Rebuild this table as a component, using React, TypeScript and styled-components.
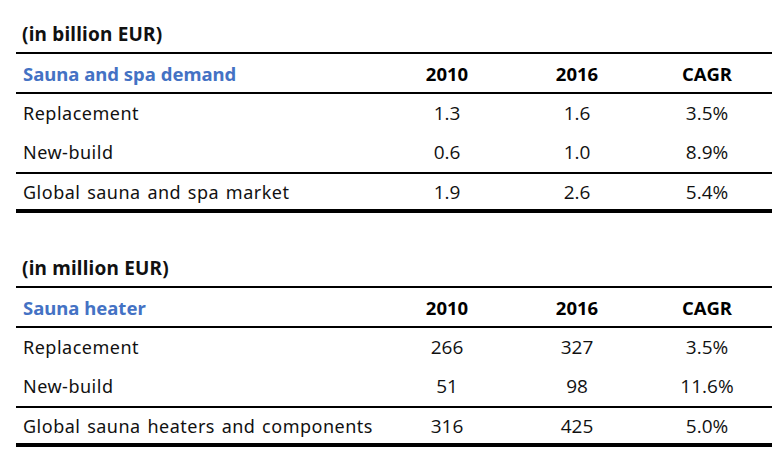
import React from "react"
import styled, { createGlobalStyle } from "styled-components"

const GlobalStyle = createGlobalStyle`
  html, body {
    margin: 0;
    padding: 0;
    background: #ffffff;
  }
  body {
    font-family: "Open Sans", "Noto Sans", sans-serif;
    color: #111111;
  }
`

interface Row {
  label: string
  y2010: string
  y2016: string
  cagr: string
}

interface TableData {
  unit: string
  title: string
  rows: Row[]
  total: Row
}

const tables: TableData[] = [
  {
    unit: "(in billion EUR)",
    title: "Sauna and spa demand",
    rows: [
      { label: "Replacement", y2010: "1.3", y2016: "1.6", cagr: "3.5%" },
      { label: "New-build", y2010: "0.6", y2016: "1.0", cagr: "8.9%" },
    ],
    total: { label: "Global sauna and spa market", y2010: "1.9", y2016: "2.6", cagr: "5.4%" },
  },
  {
    unit: "(in million EUR)",
    title: "Sauna heater",
    rows: [
      { label: "Replacement", y2010: "266", y2016: "327", cagr: "3.5%" },
      { label: "New-build", y2010: "51", y2016: "98", cagr: "11.6%" },
    ],
    total: { label: "Global sauna heaters and components", y2010: "316", y2016: "425", cagr: "5.0%" },
  },
]

const DataRow: React.FC<{ row: Row; variant?: "first" | "plain" | "total" }> = ({ row, variant = "plain" }) => (
  <S.Row $variant={variant}>
    <S.Label>{row.label}</S.Label>
    <S.Num>{row.y2010}</S.Num>
    <S.Num>{row.y2016}</S.Num>
    <S.Num>{row.cagr}</S.Num>
  </S.Row>
)

export default function App() {
  return (
    <>
      <GlobalStyle />
      <S.Page>
        {tables.map((t) => (
          <S.Section key={t.unit}>
            <S.Unit>{t.unit}</S.Unit>
            <S.Table>
              <S.Header>
                <S.Title>{t.title}</S.Title>
                <S.HeadCell>2010</S.HeadCell>
                <S.HeadCell>2016</S.HeadCell>
                <S.HeadCell>CAGR</S.HeadCell>
              </S.Header>
              {t.rows.map((r, i) => (
                <DataRow key={r.label} row={r} variant={i === 0 ? "first" : "plain"} />
              ))}
              <DataRow row={t.total} variant="total" />
            </S.Table>
          </S.Section>
        ))}
      </S.Page>
    </>
  )
}

const S = {
  Page: styled.div`
    width: 784px;
    height: 468px;
    padding: 0 12px 0 16px;
    box-sizing: border-box;
    display: flex;
    flex-direction: column;
  `,
  Section: styled.div`
    height: 240px;
    display: flex;
    flex-direction: column;
  `,
  Unit: styled.div`
    height: 52px;
    box-sizing: border-box;
    padding: 22px 0 0 6px;
    font-family: "Noto Sans", sans-serif;
    font-size: 19px;
    font-weight: 700;
    letter-spacing: 0.2px;
    line-height: 24px;
    color: #111111;
  `,
  Table: styled.div`
    display: flex;
    flex-direction: column;
    border-top: 2px solid #000000;
    border-bottom: 4px solid #000000;
  `,
  Header: styled.div`
    display: grid;
    grid-template-columns: 366px 130px 130px 130px;
    height: 38px;
    align-items: center;
  `,
  Title: styled.div`
    padding-left: 7px;
    font-family: "Noto Sans", sans-serif;
    font-size: 18.5px;
    font-weight: 700;
    color: #4472c4;
  `,
  HeadCell: styled.div`
    text-align: center;
    font-size: 18.5px;
    font-weight: 700;
    color: #000000;
  `,
  Row: styled.div<{ $variant: "first" | "plain" | "total" }>`
    display: grid;
    grid-template-columns: 366px 130px 130px 130px;
    align-items: center;
    height: ${(p) => (p.$variant === "total" ? "35px" : p.$variant === "first" ? "38px" : "40px")};
    border-top: ${(p) => (p.$variant === "plain" ? "none" : "2px solid #000000")};
  `,
  Label: styled.div`
    padding-left: 7px;
    font-family: "Noto Sans", sans-serif;
    font-size: 18px;
    letter-spacing: 0.5px;
    word-spacing: 1.5px;
    color: #111111;
  `,
  Num: styled.div`
    text-align: center;
    font-size: 19px;
    color: #111111;
  `,
}
